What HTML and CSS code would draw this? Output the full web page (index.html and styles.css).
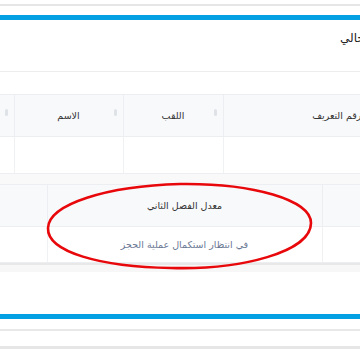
FILE: index.html
```html
<!DOCTYPE html>
<html lang="ar">
<head>
    <meta charset="UTF-8">
    <meta name="viewport" content="width=device-width, initial-scale=1.0">
    <title>نتائج الموسم الحالي</title>
    <link rel="stylesheet" href="styles.css">
</head>
<body>
    <div class="page">
        <div class="panel-end"></div>

        <!-- Results panel -->
        <div class="panel">
            <div class="panel-heading"><span class="panel-title">نتائج الموسم الدراسي الحالي</span></div>
            <div class="panel-body">
                <table class="grid grid-students">
                    <thead>
                        <tr>
                            <th class="col-id">رقم التعريف<span class="sort"></span></th>
                            <th class="col-last">اللقب<span class="sort"></span></th>
                            <th class="col-first">الاسم<span class="sort"></span></th>
                            <th class="col-more"><span class="sort"></span></th>
                        </tr>
                    </thead>
                    <tbody>
                        <tr><td></td><td></td><td></td><td></td></tr>
                    </tbody>
                </table>
                <div class="gap"></div>
                <table class="grid grid-average">
                    <thead>
                        <tr>
                            <th class="col-side"></th>
                            <th class="col-average">معدل الفصل الثاني</th>
                            <th class="col-edge"></th>
                        </tr>
                    </thead>
                    <tbody>
                        <tr>
                            <td></td>
                            <td class="pending">في انتظار استكمال عملية الحجز</td>
                            <td></td>
                        </tr>
                    </tbody>
                </table>
            </div>
            <div class="panel-foot"></div>
        </div>

        <!-- Next panel -->
        <div class="panel panel-next">
            <div class="panel-line"></div>
            <div class="panel-line thick"></div>
        </div>

        <!-- Highlight around the average -->
        <svg class="mark" width="290" height="96" viewBox="0 0 290 96">
            <path d="M145 4 C 218 3, 276 20, 276 43 C 276 72, 206 90, 136 88 C 66 87, 12 72, 13 48 C 14 24, 72 6, 145 4 Z"
                  fill="none" stroke="#e8080b" stroke-width="2.6"/>
        </svg>
    </div>
</body>
</html>
```

FILE: styles.css
```css
body {
    margin: 0;
    padding: 0;
    background-color: #fff;
    overflow: hidden;
    font-family: "DejaVu Sans", sans-serif;
    color: #333;
}

.page {
    position: relative;
    width: 500px;
    margin-left: -40px;
    direction: rtl;
}

.panel-end {
    height: 4px;
    border-bottom: 2px solid #e6e6e6;
    margin-bottom: 9px;
}

.panel {
    border-top: 5px solid #03a0e3;
}

/* title starts near the right edge of the screen */
.panel-heading {
    height: 52px;
    line-height: 36px;
    direction: ltr;
    text-align: left;
    padding-left: 380px;
    font-size: 12px;
    white-space: nowrap;
    border-bottom: 1px solid #ededed;
    box-sizing: border-box;
}

.panel-title {
    display: inline-block;
    direction: rtl;
    color: #222;
}

.panel-body {
    padding-top: 22px;
}

.grid {
    width: 100%;
    border-collapse: collapse;
    table-layout: fixed;
}

.grid th {
    position: relative;
    height: 42px;
    padding: 0;
    background-color: #f8f9fb;
    font-weight: normal;
    font-size: 9.5px;
    color: #333;
    text-align: center;
    border: 1px solid #eceef1;
    box-sizing: border-box;
}

.grid td {
    height: 36px;
    padding: 0;
    border-left: 1px solid #f0f1f3;
    border-right: 1px solid #f0f1f3;
    border-bottom: 1px solid #eceef1;
    font-size: 9.5px;
    text-align: center;
}

.grid tr > :first-child { border-right: none; }

.grid-students .col-id { width: 237px; padding-right: 10px; }
.grid-students .col-last { width: 100px; }
.grid-students .col-first { width: 109px; }

.grid-average .col-side { width: 138px; }
.grid-average .col-average { width: 275px; }

.grid-average td { height: 35px; }

.pending {
    color: #6a7894;
}

/* sort arrows, light grey */
.sort {
    position: absolute;
    right: 6px;
    top: 14px;
    width: 3px;
    height: 7px;
    border-radius: 2px;
    background-color: #dfe2e6;
}

.gap {
    height: 10px;
    background-color: #f9f9f9;
}

.panel-foot {
    height: 7px;
    border-top: 2px solid #e8e8e8;
    background-color: #f7f7f7;
    margin-bottom: 42px;
}

.panel-next .panel-line {
    height: 10px;
    border-bottom: 2px solid #e8e8e8;
}

.panel-next .panel-line.thick {
    height: 15px;
    border-bottom: 3px solid #e6e6e6;
}

.mark {
    position: absolute;
    left: 75px;
    top: 180px;
}
```
